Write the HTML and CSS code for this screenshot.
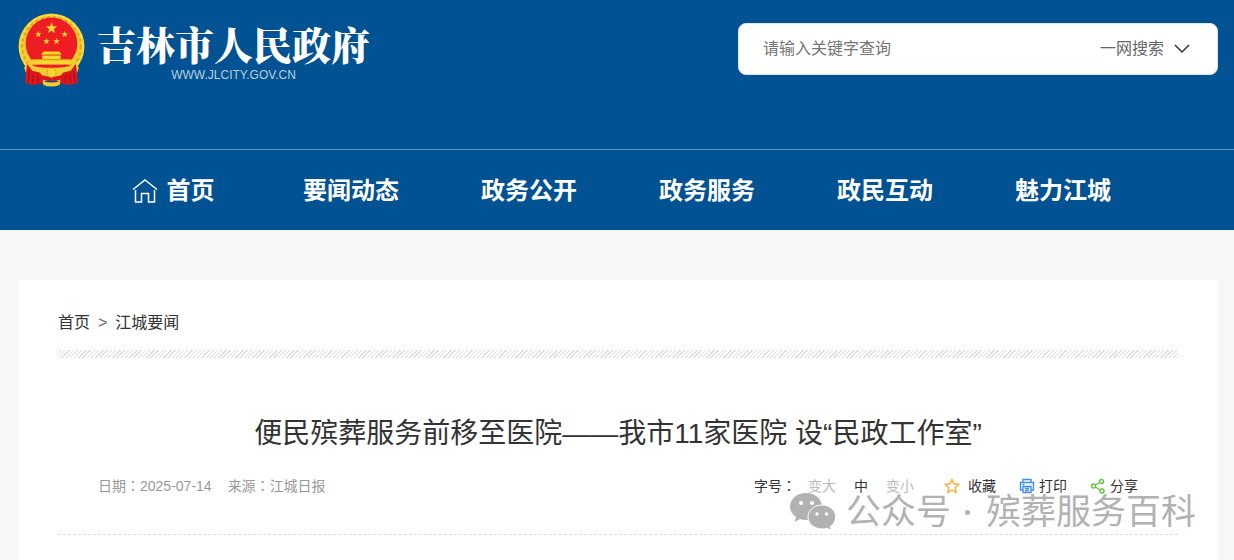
FILE: index.html
```html
<!DOCTYPE html>
<html lang="zh-CN">
<head>
  <meta charset="utf-8">
  <meta name="viewport" content="width=device-width, initial-scale=1">
  <title>便民殡葬服务前移至医院——我市11家医院 设“民政工作室”</title>
  <link rel="stylesheet" href="styles.css">
</head>
<body>
  <header class="header">
    <div class="wrap header-top">
      <a href="#" class="logo">
        <svg class="emblem" viewBox="0 0 66 73" aria-hidden="true">
          <defs>
            <path id="star" d="M0-6 1.4-1.9 5.7-1.9 2.3.7 3.5 4.9 0 2.4-3.5 4.9-2.3.7-5.7-1.9-1.4-1.9z"/>
          </defs>
          <circle cx="33" cy="33" r="32.500" fill="#f5cb2e"/>
          <circle cx="33" cy="33" r="29" fill="none" stroke="#dba423" stroke-width="2" stroke-dasharray="3 3"/>
          <circle cx="33" cy="33" r="31" fill="none" stroke="#ffe04a" stroke-width="1.500" stroke-dasharray="5 2"/>
          <circle cx="33" cy="30" r="25.500" fill="#ee1c23"/>
          <g fill="#fcd72f">
            <use href="#star" transform="translate(33 15)"/>
            <use href="#star" transform="translate(20 21) scale(.58)"/>
            <use href="#star" transform="translate(46 21) scale(.58)"/>
            <use href="#star" transform="translate(28 28) scale(.58)"/>
            <use href="#star" transform="translate(38 28) scale(.58)"/>
            <path d="M25 38h16l2 3H23zM24 42h18v4H24zM14 46h38v5H14z"/>
          </g>
          <path d="M14 46h38M23 41h20" stroke="#d99a1b"/>
          <path d="M13 51h40l-4 3H17z" fill="#ee1c23"/>
          <path d="M10 49c5 4 12 5 18 5h10c6 0 13-1 18-5l4 5-4 11c-8 5-15 3-20 1h-6c-5 2-12 4-20-1L6 54z" fill="#f5cb2e"/>
          <path d="M9 50l5 7 8 2 3 9-3 2-9 1-3-2-2 1-1-3z" fill="#dc151c"/>
          <path d="M57 50l-5 7-8 2-3 9 3 2 9 1 3-2 2 1 1-3z" fill="#dc151c"/>
          <path d="M22 61q11 4 22 0v4q-11 4-22 0z" fill="#dc151c"/>
          <path d="M24 67q9 3 18 0l-1 4q-8 3-16 0z" fill="#f5cb2e"/>
          <circle cx="33" cy="59" r="4.500" fill="#fcd72f" stroke="#d99a1b" stroke-dasharray="2 1"/>
          <path d="M11 57l-1 11M15 61l-1 8M19 62l1 7M55 57l1 11M51 61l1 8M47 62l-1 7" fill="none" stroke="#a90e17"/>
        </svg>
        <span class="logo-text">
          <strong class="logo-name">吉林市人民政府</strong>
          <span class="logo-url">WWW.JLCITY.GOV.CN</span>
        </span>
      </a>
      <form class="search">
        <input type="text" class="search-input" placeholder="请输入关键字查询" aria-label="请输入关键字查询">
        <select class="search-type" aria-label="搜索范围">
          <option>一网搜索</option>
        </select>
        <svg class="search-arrow" viewBox="0 0 16 10" aria-hidden="true"><path d="M1 1l7 7 7-7"/></svg>
      </form>
    </div>
    <nav class="nav">
      <div class="wrap">
        <ul class="nav-list">
          <li>
            <a href="#">
              <svg class="home-icon" viewBox="0 0 26 24" aria-hidden="true"><path d="M1 10.500 13 1l12 9.500M3.500 11v12h6v-8.500h7V23h6V11"/></svg>
              首页
            </a>
          </li>
          <li><a href="#">要闻动态</a></li>
          <li><a href="#">政务公开</a></li>
          <li><a href="#">政务服务</a></li>
          <li><a href="#">政民互动</a></li>
          <li><a href="#">魅力江城</a></li>
        </ul>
      </div>
    </nav>
  </header>

  <main class="wrap">
    <article class="article">
      <div class="crumbs">
        <a href="#">首页</a><span class="sep">&gt;</span><a href="#">江城要闻</a>
      </div>
      <div class="stripes"></div>
      <h1 class="title">便民殡葬服务前移至医院——我市11家医院 设“民政工作室”</h1>
      <div class="meta">
        <div class="source">
          <span>日期<span class="colon" lang="zh-TW">：</span>2025-07-14</span>
          <span>来源<span class="colon" lang="zh-TW">：</span>江城日报</span>
        </div>
        <div class="tools">
          <div class="font-size">
            <span class="label">字号<span class="colon" lang="zh-TW">：</span></span>
            <button type="button" class="muted">变大</button>
            <button type="button">中</button>
            <button type="button" class="muted">变小</button>
          </div>
          <div class="actions">
            <button type="button">
              <svg class="icon star" viewBox="0 0 16 16" aria-hidden="true"><path d="M8 1.500l2 4.300 4.700.6-3.500 3.200.9 4.700L8 12l-4.100 2.300.9-4.700L1.300 6.400 6 5.800z"/></svg>
              收藏
            </button>
            <button type="button">
              <svg class="icon print" viewBox="0 0 16 16" aria-hidden="true"><path d="M4 4V1.500h8V4M4 12H1.500V4.500h13V12H12M4 8.500h8v6H4zM6 10.500h4M6 12.500h4M3.500 6.500h2"/></svg>
              打印
            </button>
            <button type="button">
              <svg class="icon share" viewBox="0 0 16 16" aria-hidden="true"><circle cx="3.500" cy="8" r="2"/><circle cx="11.500" cy="3.500" r="2"/><circle cx="12" cy="13" r="2"/><path d="M5.300 7l4.400-2.500M5.300 9l4.900 3"/></svg>
              分享
            </button>
          </div>
        </div>
      </div>
      <div class="watermark">
        <svg class="wechat" viewBox="0 0 46 38" aria-hidden="true">
          <path fill="#b2b2b2" d="M16 0C7 0 0 6 0 13.500c0 4.300 2.300 8 6 10.500l-1.500 5 5.500-3c2 .6 4 1 6 1 9 0 16-6 16-13.500S25 0 16 0z"/>
          <path fill="#b2b2b2" stroke="#fff" d="M32 12c-7.700 0-14 5.300-14 12s6.300 12 14 12c1.800 0 3.500-.3 5-.8l4.500 2.300-1.200-4c3.300-2.200 5.400-5.600 5.400-9.500C45.700 17.300 39.700 12 32 12z"/>
          <g fill="#fff"><circle cx="11" cy="10" r="2"/><circle cx="22" cy="10" r="2"/><circle cx="27" cy="21" r="1.700"/><circle cx="36.500" cy="21" r="1.700"/></g>
        </svg>
        <span>公众号</span>
        <span class="dot"></span>
        <span>殡葬服务百科</span>
      </div>
    </article>
  </main>
</body>
</html>
```
FILE: styles.css
```css
* {
  box-sizing: border-box;
}
body {
  margin: 0;
  background: #f7f7f7;
  color: #333;
  font: 16px/24px "Liberation Sans", "Noto Sans CJK SC", sans-serif;
}
a {
  color: inherit;
  text-decoration: none;
}
button {
  padding: 0;
  border: 0;
  background: none;
  color: inherit;
  font: inherit;
  cursor: pointer;
}
.wrap {
  max-width: 1234px;
  margin: 0 auto;
  padding: 0 16px 0 18px;
}

/* header */
.header {
  background: #005293;
  color: #fff;
}
.header-top {
  display: flex;
  justify-content: space-between;
  align-items: flex-start;
  min-height: 149px;
}
.logo {
  display: flex;
  gap: 12px;
  padding-top: 13px;
}
.emblem {
  width: 67px;
  height: 74px;
}
.logo-text {
  display: flex;
  flex-direction: column;
  align-items: center;
  padding-top: 6px;
}
.logo-name {
  font: 900 39px/48px "Noto Serif CJK SC", "Noto Sans CJK SC", serif;
}
.logo-url {
  color: #b9cfe1;
  font-size: 12px;
  line-height: 16px;
}
.search {
  display: flex;
  align-items: center;
  width: 40%;
  height: 52px;
  margin-top: 23px;
  padding: 0 27px 0 24px;
  border: 1px solid #dce6ee;
  border-radius: 8px;
  background: #fff;
}
.search-input {
  flex: 1;
  min-width: 0;
  padding: 0;
  border: 0;
  outline: 0;
  background: none;
  color: #333;
  font: inherit;
}
.search-input::placeholder {
  color: #757575;
}
.search-type {
  appearance: none;
  padding: 0;
  border: 0;
  background: none;
  color: #666;
  font: inherit;
}
.search-arrow {
  width: 16px;
  height: 10px;
  margin-left: 9px;
  fill: none;
  stroke: #333;
  stroke-width: 1.5;
}

/* nav */
.nav {
  border-top: 1px solid #6699be;
}
.nav-list {
  display: grid;
  grid-template-columns: repeat(6, 1fr);
  max-width: 1068px;
  margin: 0 auto;
  padding: 0;
  list-style: none;
}
.nav-list a {
  display: flex;
  justify-content: center;
  align-items: center;
  gap: 9px;
  padding-top: 2px;
  font-size: 24px;
  font-weight: bold;
  line-height: 78px;
}
.home-icon {
  width: 26px;
  height: 24px;
  fill: none;
  stroke: #fff;
  stroke-width: 1.5;
}

/* article */
.article {
  position: relative;
  margin-top: 50px;
  padding: 31px 40px 25px;
  background: #fff;
}
.sep {
  margin: 0 8px;
  color: #666;
}
.stripes {
  height: 8px;
  margin-top: 15px;
  background: repeating-linear-gradient(-45deg, #ddd 0, #ddd 1px, #fff 1px, #fff 3px);
}
.title {
  margin: 56px 0 0;
  font-size: 28px;
  font-weight: normal;
  line-height: 40px;
  text-align: center;
}
.meta {
  display: flex;
  justify-content: space-between;
  padding: 20px 40px 36px;
  border-bottom: 1px dashed #ddd;
  font-size: 14px;
  white-space: nowrap;
}
.source {
  display: flex;
  gap: 16px;
  color: #999;
}
/* centred full-width colon */
.colon {
  font-family: "Noto Sans CJK TC", sans-serif;
  line-height: 1;
}
.tools {
  display: flex;
  gap: 30px;
}
.font-size {
  display: flex;
  gap: 18px;
}
.label {
  margin-right: -6px;
}
.muted {
  color: #bbb;
}
.actions {
  display: flex;
  gap: 23px;
}
.actions button {
  display: flex;
  align-items: center;
  gap: 4px;
}
.icon {
  width: 16px;
  height: 16px;
  fill: none;
  stroke-width: 1.4;
}
.star {
  margin-right: 4px;
  stroke: #ffab2e;
}
.print {
  stroke: #3f8cf3;
}
.share {
  stroke: #63c33a;
}

/* account mark over the tool row */
.watermark {
  position: absolute;
  top: 207px;
  right: 22px;
  display: flex;
  align-items: center;
  color: #b2b2b2;
  font-size: 35px;
  line-height: 50px;
  white-space: nowrap;
  pointer-events: none;
}
.wechat {
  width: 46px;
  height: 38px;
  margin-right: 10px;
}
.dot {
  width: 5px;
  height: 5px;
  margin: 0 16px 0 14px;
  border-radius: 50%;
  background: #b2b2b2;
}
```
